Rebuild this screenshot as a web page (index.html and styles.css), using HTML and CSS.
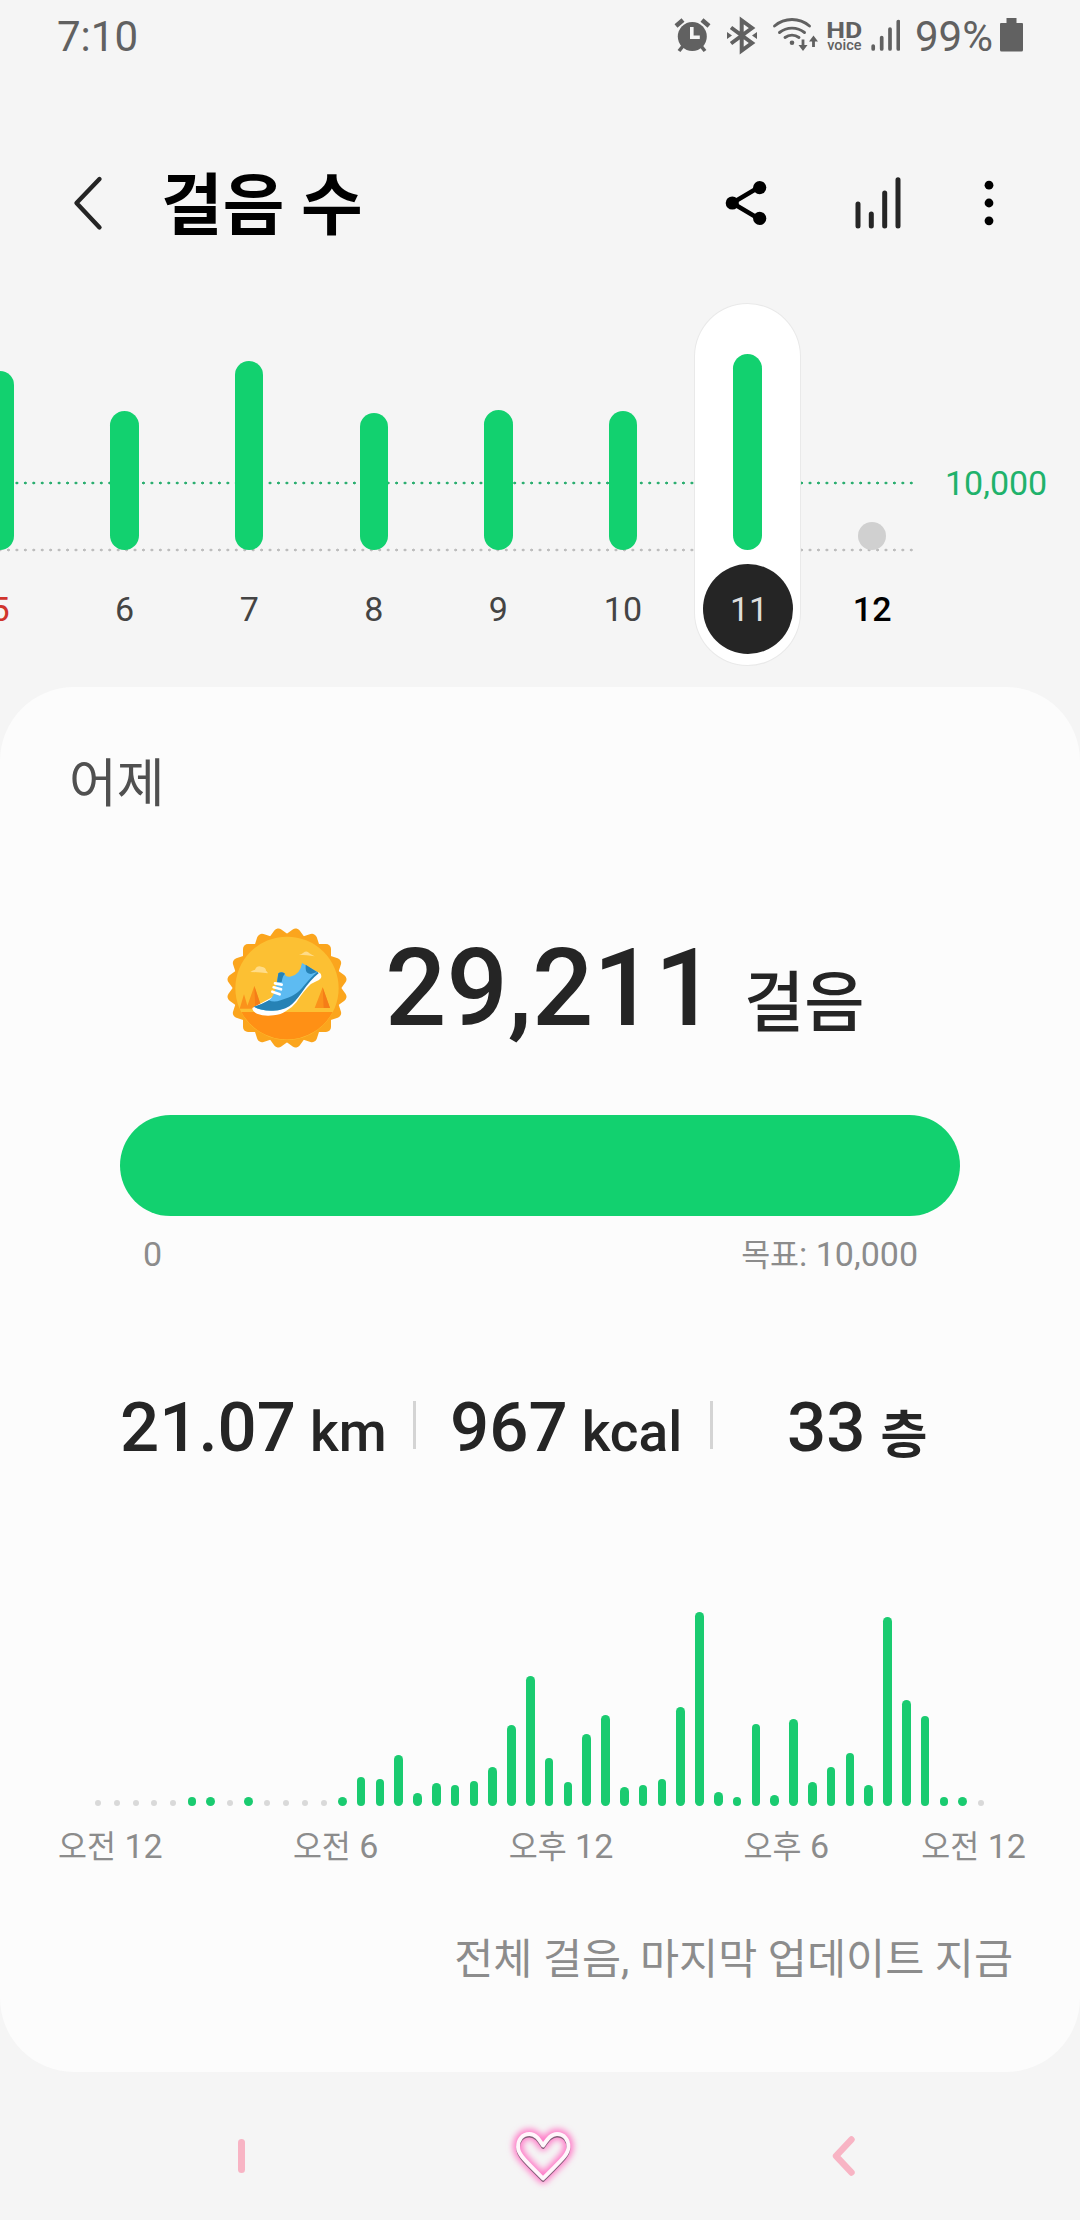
FILE: index.html
```html
<!DOCTYPE html>
<html lang="ko">
<head>
<meta charset="utf-8">
<title>걸음 수</title>
<link rel="stylesheet" href="styles.css">
</head>
<body>
<div class="screen">
  <div class="status">
    <span class="clock">7:10</span>
    <svg class="status-icons" width="228" height="40" viewBox="672 16 228 40" fill="#616161" stroke="#616161" stroke-width="0">
      <circle cx="692.3" cy="36.6" r="14.5"/>
      <path d="M676 26l7-6M709 26l-7-6" stroke-width="4.5"/>
      <path d="M683 46l-4 5M701 46l4 5" stroke-width="3.6"/>
      <path d="M691.8 27v10.3h8" fill="none" stroke="#f5f5f5" stroke-width="3.6"/>
      <path d="M731 27.500l21 15.500-10.300 7.500v-30l10.300 7.500-21 15.500" fill="none" stroke-width="4"/>
      <path d="M727 32l5 3.500-5 3.500zM757 32l-5 3.500 5 3.500z"/>
      <g fill="none" stroke-width="2.900" stroke-linecap="round">
        <path d="M774.500 26a27 27 0 0 1 35 0M779.500 32.500a20 20 0 0 1 25 0M785 37.500a12 12 0 0 1 14 0"/>
      </g>
      <circle cx="792" cy="42.700" r="2.300"/>
      <path d="M803 39.500v8M813.500 47v-8" stroke-width="2.800"/>
      <path d="M798.500 45l4.500 6 4.500-6zM809 41.500l4.500-6 4.500 6z"/>
      <text class="hd" x="826.300" y="38" textLength="36" lengthAdjust="spacingAndGlyphs">HD</text>
      <text class="voice" x="827.200" y="49.700" textLength="34.300" lengthAdjust="spacingAndGlyphs">voice</text>
      <path d="M873.200 46v3M881.700 37.500v11.500M890 29v20M898.300 21.500v27.500" stroke-width="3.700" stroke-linecap="round"/>
    </svg>
    <span class="percent">99%</span>
    <svg class="battery" width="23" height="34" viewBox="0 0 23 34" fill="#616161"><path d="M6.500 0h10v5H22a1 1 0 0 1 1 1v26a1.500 1.500 0 0 1-1.500 1.500h-20A1.500 1.500 0 0 1 0 32V6a1 1 0 0 1 1-1h5.500z"/></svg>
  </div>

  <header class="header">
    <svg class="back" width="34" height="60" viewBox="0 0 34 60" fill="none" stroke="#252525" stroke-width="4.400" stroke-linecap="round" stroke-linejoin="round"><path d="M29.500 6L6.500 30l23 24.500"/></svg>
    <h1>걸음 수</h1>
    <svg class="share" width="44" height="44" viewBox="0 0 44 44"><path d="M35.700 5.800L8.300 22l27.400 16.200" fill="none" stroke="#000" stroke-width="4.500"/><circle cx="8.300" cy="22" r="6.600"/><circle cx="35.700" cy="5.800" r="0"/><circle cx="35.700" cy="6.600" r="6.600"/><circle cx="35.700" cy="37.400" r="6.600"/></svg>
    <svg class="trend" width="46" height="56" viewBox="0 0 46 56" fill="none" stroke="#252525" stroke-width="5" stroke-linecap="round"><path d="M3 29v22M16.300 39v12M29.700 18v33M43 4.700V51"/></svg>
    <svg class="more" width="10" height="46" viewBox="0 0 10 46"><circle cx="5" cy="5.200" r="4.400"/><circle cx="5" cy="23" r="4.400"/><circle cx="5" cy="40.800" r="4.400"/></svg>
  </header>

  <section class="week">
    <div class="days">
      <div class="day sunday"><div class="track"><i style="height:179px"></i></div><span>5</span></div>
      <div class="day"><div class="track"><i style="height:139px"></i></div><span>6</span></div>
      <div class="day"><div class="track"><i style="height:189px"></i></div><span>7</span></div>
      <div class="day"><div class="track"><i style="height:137px"></i></div><span>8</span></div>
      <div class="day"><div class="track"><i style="height:140px"></i></div><span>9</span></div>
      <div class="day"><div class="track"><i style="height:139px"></i></div><span>10</span></div>
      <div class="day selected"><div class="track"><i style="height:196px"></i></div><span>11</span></div>
      <div class="day today"><div class="track"><i style="height:28px"></i></div><span>12</span></div>
    </div>
    <div class="goal-mark">10,000</div>
  </section>

  <main class="card">
    <h2>어제</h2>
    <div class="summary">
      <svg class="badge" width="122" height="122" viewBox="47 52 366 366">
        <g fill="#fba51d">
          <rect x="98" y="103" width="264" height="264" rx="15"/>
          <rect x="98" y="103" width="264" height="264" rx="15" transform="rotate(18 230 235)"/>
          <rect x="98" y="103" width="264" height="264" rx="15" transform="rotate(36 230 235)"/>
          <rect x="98" y="103" width="264" height="264" rx="15" transform="rotate(54 230 235)"/>
          <rect x="98" y="103" width="264" height="264" rx="15" transform="rotate(72 230 235)"/>
        </g>
        <circle cx="230" cy="236" r="155" fill="#fcc033"/>
        <path d="M93 307H367A155 155 0 0 1 93 307z" fill="#ff9015"/>
        <path d="M88 297L101 254l13 43zM108 297l24-68 23 68zM313 295l24-62 22 62z" fill="#fb921b"/>
        <path d="M132 229l23 68h-20zM337 233l22 62h-19z" fill="#f57d18"/>
        <path d="M120 187q8-6 14-7 6-13 19-9 14 2 14 12 6 4 5 8-27-4-52-4zM266 135q9-1 12-5 12-9 19 1 7 4 16 9-24-4-47-5z" fill="#ffdc88"/>
        <path d="M126 295Q126 305 140 312Q162 321 190 317Q212 315 226 305Q246 294 258 278Q276 250 292 233Q302 220 315 216Q327 213 332 205Q336 193 325 188Z" fill="#fff"/>
        <path d="M131 291Q161 283 176 272 193 259 198 225L204 191q9-7 20 1 0 10 15 9 31-5 36-41l48 28q-15 12-27 27-25 30-45 58-21 27-60 29-36 3-60-11z" fill="#5dbbf2"/>
        <path d="M131 291q26-8 45-19 14 7 35 0 28-9 39-16 16-8 32-29 22-27 39-40l4 4q-25 20-48 54-25 36-40 45-26 15-55 13-32-1-51-12zM204 191q9-7 20 1-7 5-10 25l-14 1zM286 165l34 22-18 6q-16 0-16-17z" fill="#2682b5"/>
        <path d="M194 221l20 4M190 233l22 6M186 246l22 8" fill="none" stroke="#fff" stroke-width="8" stroke-linecap="round"/>
      </svg>
      <strong>29,211</strong>
      <span class="unit">걸음</span>
    </div>
    <div class="progress"></div>
    <div class="range"><span>0</span><span><b>목표</b>: 10,000</span></div>
    <div class="stats">
      <div class="stat distance">21.07<small>km</small></div>
      <div class="stat energy">967<small>kcal</small></div>
      <div class="stat floors">33<small>층</small></div>
    </div>
    <div class="hours">
      <i class="none"></i><i class="none"></i><i class="none"></i><i class="none"></i><i class="none"></i><i></i><i></i><i class="none"></i><i></i><i class="none"></i><i class="none"></i><i class="none"></i><i class="none"></i><i></i>
      <i style="height:29px"></i><i style="height:27px"></i><i style="height:51px"></i><i style="height:13.5px"></i><i style="height:23px"></i><i style="height:21px"></i><i style="height:25px"></i><i style="height:39.5px"></i><i style="height:81px"></i><i style="height:130px"></i>
      <i style="height:48px"></i><i style="height:24px"></i><i style="height:72px"></i><i style="height:91px"></i><i style="height:19.5px"></i><i style="height:21px"></i><i style="height:27.5px"></i><i style="height:99.5px"></i><i style="height:194.5px"></i><i style="height:14.5px"></i><i></i><i style="height:82px"></i><i style="height:11.5px"></i><i style="height:87.5px"></i><i style="height:24px"></i><i style="height:39.5px"></i><i style="height:53px"></i><i style="height:21px"></i><i style="height:189px"></i><i style="height:106px"></i><i style="height:90px"></i><i></i><i></i><i class="none"></i>
    </div>
    <div class="axis">
      <span><b>오전</b> 12</span><span><b>오전</b> 6</span><span><b>오후</b> 12</span><span><b>오후</b> 6</span><span><b>오전</b> 12</span>
    </div>
    <p class="note">전체 걸음, 마지막 업데이트 지금</p>
  </main>

  <nav class="nav">
    <span class="recents"></span>
    <svg class="home" width="84" height="84" viewBox="501 2115 84 84" fill="none" stroke-linejoin="round">
      <defs>
        <path id="heart" d="M543 2146.500C539.500 2141 536 2135 529.500 2135C522 2135 518 2141 518 2148C518 2156 527 2163 543 2179.500C559 2163 568.500 2156 568.500 2148C568.500 2141 564.500 2135 557 2135C550.500 2135 547 2141 543 2146.500Z"/>
        <filter id="glow" x="-50%" y="-50%" width="200%" height="200%"><feGaussianBlur stdDeviation="3"/></filter>
        <filter id="soft"><feGaussianBlur stdDeviation=".5"/></filter>
      </defs>
      <use href="#heart" stroke="#ff7cc8" stroke-width="10" filter="url(#glow)"/>
      <use href="#heart" y="1.600" stroke="#85617a" stroke-width="3.600" filter="url(#soft)"/>
      <use href="#heart" stroke="#fff6fb" stroke-width="3.900"/>
    </svg>
    <svg class="nav-back" width="26" height="42" viewBox="0 0 26 42" fill="none" stroke="#f8b4c4" stroke-width="6.400" stroke-linecap="round" stroke-linejoin="round"><path d="M20.500 4.500L5 21l15.500 16.500"/></svg>
  </nav>
</div>
</body>
</html>
```

FILE: styles.css
```css
* { box-sizing: border-box; }

body {
  margin: 0;
  background: #f5f5f5;
  font-family: Roboto, "Noto Sans CJK KR", sans-serif;
  color: #252525;
}

h1, h2, p { margin: 0; }

.screen {
  width: 1080px;
  height: 2220px;
  overflow: hidden;
  display: flex;
  flex-direction: column;
}

/* Status bar */
.status {
  height: 73px;
  padding-left: 57px;
  display: flex;
  color: #616161;
  font-size: 42px;
  line-height: 73px;
}
.clock { width: 615px; }
.status-icons { margin-top: 16px; }
.hd { font: 700 22.500px Roboto, sans-serif; }
.voice { font: 500 14.500px Roboto, sans-serif; }
.percent { margin-left: 15px; width: 85px; }
.battery { margin-top: 18px; }

/* Title bar */
.header {
  height: 140px;
  margin-top: 60px;
  padding-left: 70px;
  display: flex;
  align-items: center;
}
h1 {
  width: 562px;
  margin-left: 57px;
  padding-top: 6px;
  font-size: 67px;
  font-weight: 700;
  line-height: 90px;
  color: #000;
}
.share { margin-left: 1px; }
.trend { margin-left: 87px; }
.more { margin-left: 83px; }

/* Week chart */
.week {
  height: 414px;
  display: flex;
  overflow: hidden;
}
.days {
  flex: none;
  width: 936px;
  padding-right: 22px;
  display: flex;
  background-image: radial-gradient(circle, #2bae70 1.200px, transparent 1.700px), radial-gradient(circle, #bdbdbd 1.200px, transparent 1.700px);
  background-size: 8.444px 6px;
  background-repeat: repeat-x;
  background-position: 12.700px 206.700px, 12.700px 274px;
  background-origin: content-box;
  background-clip: content-box;
}
.day {
  flex: none;
  width: 105px;
  height: 361px;
  margin: 31px 9.800px 0;
  display: flex;
  flex-direction: column;
  align-items: center;
  border-radius: 53px;
}
.day:first-child { margin-left: -52.500px; }
.track {
  height: 246px;
  display: flex;
  align-items: flex-end;
}
.track i {
  width: 28.500px;
  border-radius: 15px;
  background: #12d16f;
}
.day span {
  width: 90px;
  height: 90px;
  margin-top: 14px;
  border-radius: 50%;
  text-align: center;
  font-size: 34px;
  line-height: 91px;
  color: #444;
}
.sunday span { color: #d0342c; }
.selected {
  background: #fff;
  box-shadow: 0 0 0 1px #e9e9e9;
}
.selected span { padding-left: 3px; background: #252525; color: #ddd; }
.today i { background: #d0d0d0; }
.today span { color: #000; font-weight: 500; }
.goal-mark {
  margin: 190px 0 0 9px;
  font-size: 34px;
  line-height: 40px;
  color: #20b26b;
}

/* Day card */
.card {
  height: 1385px;
  padding: 68px 0 0;
  border-radius: 74px;
  background: #fcfcfc;
}
h2 {
  padding-left: 69px;
  font-size: 52px;
  line-height: 60px;
  font-weight: 400;
  color: #505050;
}
.summary {
  height: 122px;
  margin-top: 112px;
  padding-left: 226px;
  display: flex;
}
.summary strong {
  width: 359px;
  margin-left: 37px;
  font-size: 108px;
  font-weight: 500;
  line-height: 122px;
}
.unit {
  font-size: 65.500px;
  font-weight: 500;
  line-height: 154px;
}
.progress {
  height: 101px;
  margin: 66px 120px 0;
  border-radius: 51px;
  background: #12d16f;
}
.range {
  height: 40px;
  margin: 18px 162px 0 143px;
  display: flex;
  justify-content: space-between;
  font-size: 34px;
  line-height: 40px;
  color: #8c8c8c;
}
.range b, .axis b { font-size: 31.500px; font-weight: 400; line-height: 0; }

.stats {
  height: 60px;
  margin: 124px 120px 0;
  display: flex;
}
.stat {
  font-size: 69px;
  font-weight: 500;
  line-height: 60px;
  white-space: nowrap;
  background: linear-gradient(#d4d4d4, #d4d4d4) no-repeat right 3px / 3px 48px;
}
.stat small { margin-left: 14px; font-size: 55px; line-height: 0; }
.distance { width: 296px; }
.energy { width: 297px; padding-left: 34px; }
.floors { padding-left: 74px; background: none; }
.floors small { margin-left: 15px; font-size: 51px; font-weight: 700; vertical-align: -2px; }

/* Steps per half hour */
.hours {
  height: 195px;
  margin: 153px 93.700px 0;
  display: flex;
  justify-content: space-between;
  align-items: flex-end;
}
.hours i {
  width: 8.600px;
  height: 8.600px;
  border-radius: 5px;
  background: #1acb70;
}
.hours .none {
  width: 6px;
  height: 6px;
  margin: 0 1.300px;
  background: #d9d9d9;
}
.axis {
  height: 40px;
  margin: 20px 54px 0 58px;
  display: flex;
  justify-content: space-between;
  font-size: 34px;
  line-height: 40px;
  color: #8c8c8c;
}
.axis span:last-child { margin-left: -38px; }
.note {
  margin: 69px 67px 0;
  text-align: right;
  font-size: 42.500px;
  line-height: 50px;
  color: #8c8c8c;
}

/* System navigation */
.nav {
  height: 148px;
  padding: 20px 0 0 238px;
  display: flex;
  align-items: center;
}
.recents {
  width: 7px;
  height: 34px;
  border-radius: 4px;
  background: #f8b4c4;
}
.home { margin-left: 256px; }
.nav-back { margin-left: 246px; }
```
